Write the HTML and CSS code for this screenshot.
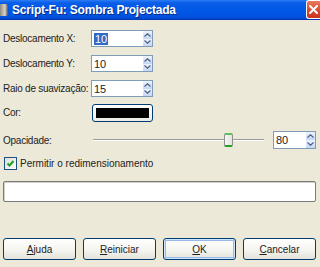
FILE: index.html
```html
<!DOCTYPE html>
<html lang="pt">
<head>
    <meta charset="UTF-8">
    <title>Script-Fu: Sombra Projectada</title>
    <link rel="stylesheet" href="styles.css">
</head>
<body>
    <div class="window">
        <div class="titlebar">
            <span class="app-icon"></span>
            <span class="title">Script-Fu: Sombra Projectada</span>
            <span class="close-btn">
                <svg width="13" height="13" viewBox="0 0 13 13"><path d="M3 3 L10 10 M10 3 L3 10" stroke="#fff" stroke-width="2" stroke-linecap="round"/></svg>
            </span>
        </div>

        <div class="content">
            <div class="form-grid">
                <label class="lbl">Deslocamento X:</label>
                <div class="ctl">
                    <div class="spin">
                        <span class="spin-val"><span class="sel">10</span></span>
                        <span class="spin-btns">
                            <span class="arr"><svg width="7" height="4" viewBox="0 0 7 4"><path d="M0.5 3.5 L3.5 0.8 L6.5 3.5" fill="none" stroke="#4d6185" stroke-width="1.2"/></svg></span>
                            <span class="arr"><svg width="7" height="4" viewBox="0 0 7 4"><path d="M0.5 0.5 L3.5 3.2 L6.5 0.5" fill="none" stroke="#4d6185" stroke-width="1.2"/></svg></span>
                        </span>
                    </div>
                </div>

                <label class="lbl">Deslocamento Y:</label>
                <div class="ctl">
                    <div class="spin">
                        <span class="spin-val">10</span>
                        <span class="spin-btns">
                            <span class="arr"><svg width="7" height="4" viewBox="0 0 7 4"><path d="M0.5 3.5 L3.5 0.8 L6.5 3.5" fill="none" stroke="#4d6185" stroke-width="1.2"/></svg></span>
                            <span class="arr"><svg width="7" height="4" viewBox="0 0 7 4"><path d="M0.5 0.5 L3.5 3.2 L6.5 0.5" fill="none" stroke="#4d6185" stroke-width="1.2"/></svg></span>
                        </span>
                    </div>
                </div>

                <label class="lbl">Raio de suavização:</label>
                <div class="ctl">
                    <div class="spin">
                        <span class="spin-val">15</span>
                        <span class="spin-btns">
                            <span class="arr"><svg width="7" height="4" viewBox="0 0 7 4"><path d="M0.5 3.5 L3.5 0.8 L6.5 3.5" fill="none" stroke="#4d6185" stroke-width="1.2"/></svg></span>
                            <span class="arr"><svg width="7" height="4" viewBox="0 0 7 4"><path d="M0.5 0.5 L3.5 3.2 L6.5 0.5" fill="none" stroke="#4d6185" stroke-width="1.2"/></svg></span>
                        </span>
                    </div>
                </div>

                <label class="lbl">Cor:</label>
                <div class="ctl">
                    <div class="color-btn"><span class="swatch"></span></div>
                </div>

                <label class="lbl">Opacidade:</label>
                <div class="ctl slider-row">
                    <div class="slider">
                        <span class="track left"></span>
                        <span class="thumb"></span>
                        <span class="track right"></span>
                    </div>
                    <div class="spin small">
                        <span class="spin-val">80</span>
                        <span class="spin-btns">
                            <span class="arr"><svg width="7" height="4" viewBox="0 0 7 4"><path d="M0.5 3.5 L3.5 0.8 L6.5 3.5" fill="none" stroke="#4d6185" stroke-width="1.2"/></svg></span>
                            <span class="arr"><svg width="7" height="4" viewBox="0 0 7 4"><path d="M0.5 0.5 L3.5 3.2 L6.5 0.5" fill="none" stroke="#4d6185" stroke-width="1.2"/></svg></span>
                        </span>
                    </div>
                </div>
            </div>

            <div class="check-row">
                <span class="checkbox">
                    <svg width="11" height="11" viewBox="0 0 11 11"><path d="M2.5 5.5 L4.5 7.5 L8.5 3" fill="none" stroke="#21a121" stroke-width="2"/></svg>
                </span>
                <span>Permitir o redimensionamento</span>
            </div>

            <div class="entry"></div>

            <div class="buttons">
                <div class="btn"><u>A</u>juda</div>
                <div class="btn"><u>R</u>einiciar</div>
                <div class="btn default"><u>O</u>K</div>
                <div class="btn"><u>C</u>ancelar</div>
            </div>
        </div>
    </div>
</body>
</html>
```
FILE: styles.css
```css
body {
    margin: 0;
    font-family: "Liberation Sans", Arial, sans-serif;
    font-size: 10px;
    color: #222;
    background-color: #ece9d8;
}
.window {
    width: 320px;
    height: 267px;
    overflow: hidden;
    background-color: #ece9d8;
}
.titlebar {
    height: 19px;
    display: flex;
    align-items: center;
    background: linear-gradient(#2b7cf4 0%, #0a5ee8 15%, #0058e6 50%, #0053e0 85%, #0046d0 100%);
    border-bottom: 1px solid #0039b3;
}
.app-icon {
    width: 8px;
    height: 12px;
    margin-right: 4px;
    background: linear-gradient(90deg, #8e8a80, #d8d4c8 60%, #5a564c);
    border-radius: 0 2px 2px 0;
}
.title {
    flex: 1;
    color: #fff;
    font-weight: bold;
    font-size: 12px;
    letter-spacing: -0.2px;
    text-shadow: 1px 1px 0 #0a2a8a;
}
.close-btn {
    width: 13px;
    height: 17px;
    display: flex;
    align-items: center;
    justify-content: center;
    background: linear-gradient(#e97a5f, #d9452a 60%, #c8361e);
    border: 1px solid #fff;
    border-right: none;
    border-radius: 3px 0 0 3px;
}
.content {
    padding: 6px 4px 0 3px;
}
.form-grid {
    display: grid;
    grid-template-columns: 88px 1fr;
    grid-template-rows: 25px 25px 25px 23px 32px;
    align-items: center;
}
.lbl {
    white-space: nowrap;
    letter-spacing: -0.25px;
}
.ctl {
    display: flex;
    align-items: center;
}
.spin {
    width: 62px;
    height: 17px;
    display: flex;
    box-sizing: border-box;
    border: 1px solid #7f9db9;
    background-color: #fff;
}
.spin-val {
    flex: 1;
    display: flex;
    align-items: center;
    padding-left: 2px;
    font-size: 11px;
}
.sel {
    background-color: #316ac5;
    color: #fff;
    padding: 0 1px;
    line-height: 12px;
}
.spin-btns {
    width: 10px;
    display: flex;
    flex-direction: column;
}
.arr {
    flex: 1;
    display: flex;
    align-items: center;
    justify-content: center;
    background: linear-gradient(#eef3fd, #c6d5f5);
    border-left: 1px solid #fff;
}
.color-btn {
    width: 61px;
    height: 18px;
    box-sizing: border-box;
    border: 1px solid #003c74;
    border-radius: 3px;
    background: linear-gradient(#fff, #ecebe6);
    padding: 3px;
    margin-left: 1px;
}
.swatch {
    display: block;
    height: 100%;
    background-color: #000;
}
.slider-row {
    gap: 9px;
}
.slider {
    width: 171px;
    margin-left: 2px;
    display: flex;
    align-items: center;
}
.track {
    height: 1px;
    background-color: #9d9c99;
    border-bottom: 1px solid #fff;
}
.track.left {
    flex: 131;
}
.track.right {
    flex: 31;
}
.thumb {
    width: 9px;
    height: 14px;
    box-sizing: border-box;
    border: 1px solid #8e8f8f;
    border-top: 2px solid #5cc05c;
    border-bottom: 2px solid #21a121;
    border-radius: 2px;
    background: linear-gradient(90deg, #f6f6f3, #e4e4dc);
}
.spin.small {
    width: 43px;
    height: 18px;
}
.check-row {
    display: flex;
    align-items: center;
    gap: 3px;
    margin-left: 1px;
    height: 14px;
}
.checkbox {
    width: 13px;
    height: 13px;
    box-sizing: border-box;
    border: 1px solid #1c5180;
    background: linear-gradient(135deg, #dcdcd7, #fff);
    display: flex;
    align-items: center;
    justify-content: center;
}
.entry {
    height: 21px;
    margin-top: 11px;
    box-sizing: border-box;
    border: 1px solid #7a7a7a;
    border-radius: 2px;
    background-color: #fff;
    box-shadow: inset 1px 1px 0 #d4d0c8;
}
.buttons {
    display: flex;
    gap: 7px;
    margin-top: 36px;
}
.btn {
    width: 73px;
    height: 22px;
    box-sizing: border-box;
    border: 1px solid #003c74;
    border-radius: 3px;
    background: linear-gradient(#ffffff, #f3f3ef 60%, #e3e2da);
    display: flex;
    align-items: center;
    justify-content: center;
    font-size: 10px;
}
.btn.default {
    box-shadow: inset 0 0 0 1px #cee7ff, inset 0 0 0 2px #98b8ea;
}
```
